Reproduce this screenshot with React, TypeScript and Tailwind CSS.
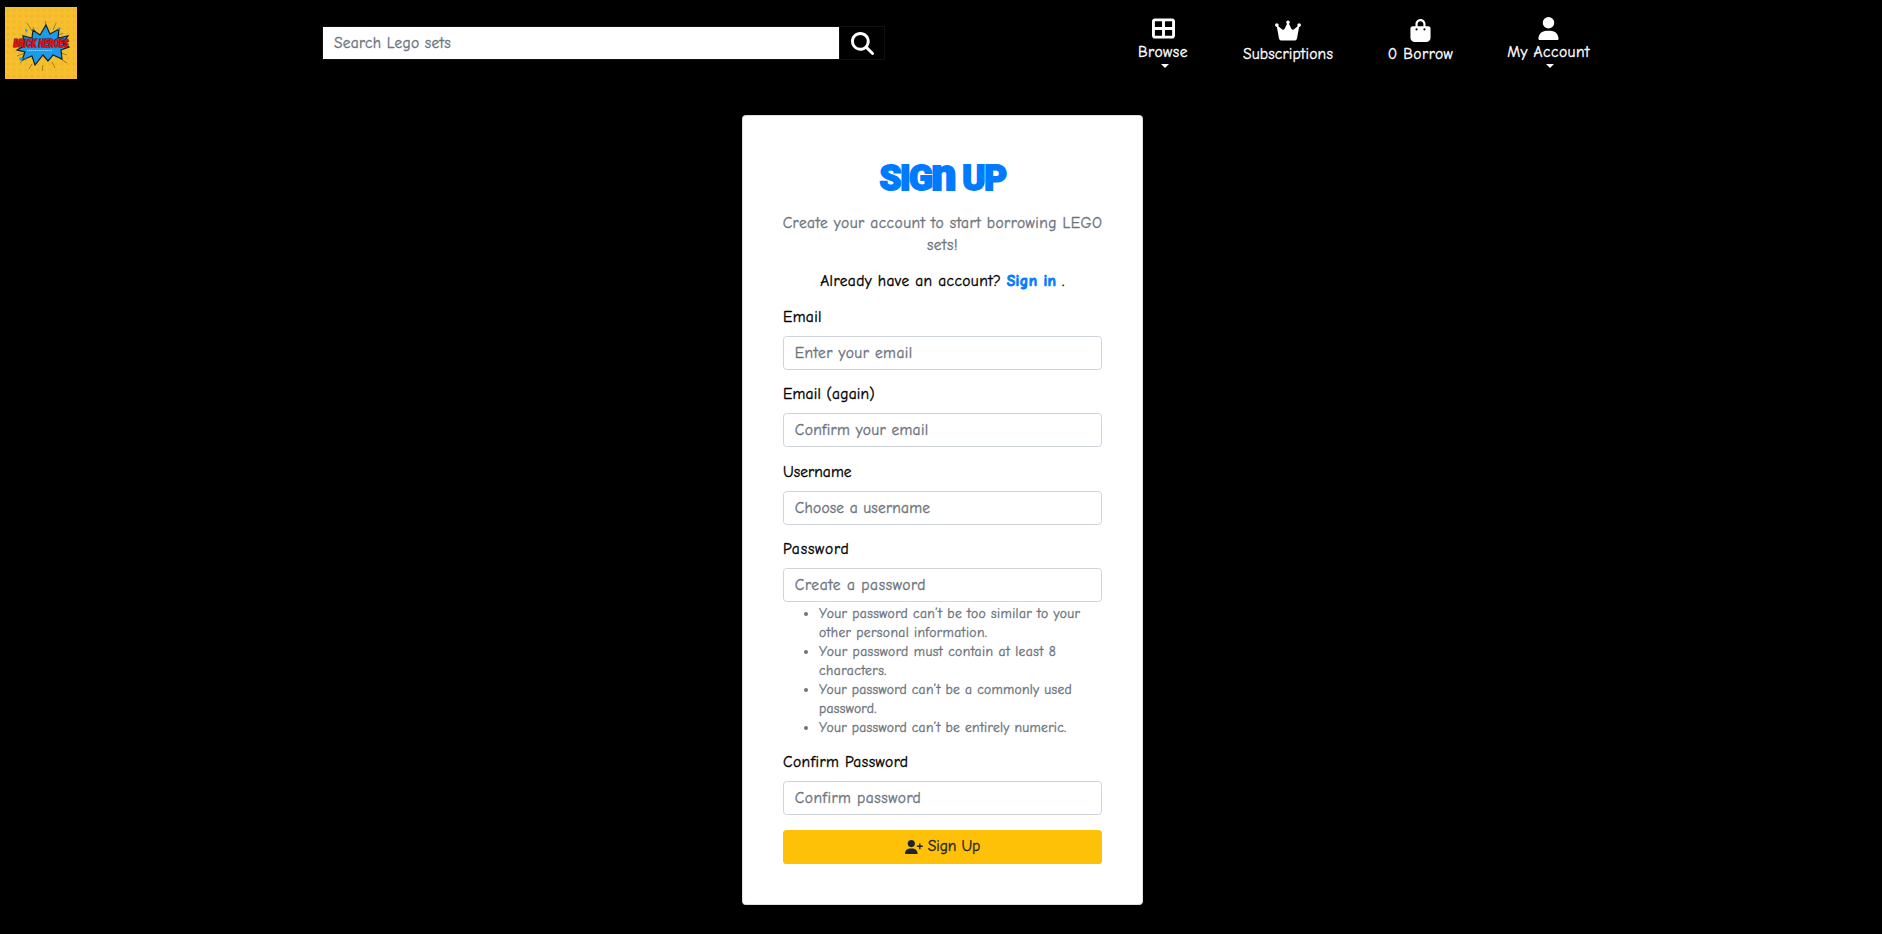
import type { ReactNode } from "react";
import {
  FaBagShopping,
  FaCrown,
  FaMagnifyingGlass,
  FaTableCellsLarge,
  FaUser,
  FaUserPlus,
} from "react-icons/fa6";

function Logo() {
  return (
    <svg viewBox="0 0 72 72" className="h-[72px] w-[72px] shrink-0" aria-label="Brick Heroes">
      <defs>
        <pattern id="dots" width="6" height="6" patternUnits="userSpaceOnUse">
          <rect width="6" height="6" fill="#f6c02c" />
          <circle cx="3" cy="3" r="1.6" fill="#f3b333" />
        </pattern>
      </defs>
      <rect width="72" height="72" fill="url(#dots)" />
      <g stroke="#8a6d1c" strokeWidth="0.8">
        <path d="M22 16l5 8M28 20l2 4M41 14l-1 6M51 16l-3 7M58 26l-6 3M17 28l6 2M12 49l8-3M15 56l6-5M38 58l-1 6M47 55l3 6M54 51l8 5M56 46l6 2M27 57l-3 5" />
      </g>
      <path
        d="M18 29l9 2 1-8 7 5 6-10 4 9 9-5-1 9 10-2-5 7 6 4-8 3 1 9-9-4-5 6-5-6-8 10-3-9-10 4 3-8-8-2 7-4z"
        fill="#1b9be8"
        stroke="#10202c"
        strokeWidth="1.2"
      />
      <path d="M20 22l3 1-2 3zM54 20l2 2-3 1zM15 50l3 1-1 3-3-1zM20 51l2 1-2 2z" fill="#2ba3cf" />
      <text
        transform="translate(36 39.800) scale(1 1.250)"
        textAnchor="middle"
        fontSize="8"
        fontWeight="900"
        fontStyle="italic"
        fill="#ee1219"
        stroke="#4a0c14"
        strokeWidth="0.9"
        paintOrder="stroke"
        className="font-['Roboto',sans-serif] tracking-[0.1px]"
      >
        BRICK HEROES
      </text>
      <path d="M22 43.500h25" stroke="#9fd4ee" strokeWidth="0.9" strokeDasharray="1.500 0.500" />
    </svg>
  );
}

function NavItem({
  icon,
  label,
  labelClass,
  caret = false,
}: {
  icon: ReactNode;
  label: string;
  labelClass: string;
  caret?: boolean;
}) {
  return (
    <a href="#" className="flex flex-col items-center text-white">
      <span className="flex h-[23px] items-center">{icon}</span>
      <span className={"mt-[2px] block whitespace-nowrap leading-[21.6px] " + labelClass}>{label}</span>
      {caret && (
        <svg viewBox="0 0 8 4" className="ml-[3px] h-[4px] w-[8px] fill-current">
          <path d="M0 0h8L4 4z" />
        </svg>
      )}
    </a>
  );
}

function Field({
  id,
  label,
  labelClass = "",
  placeholder,
  inputClass = "",
  type = "text",
  children,
}: {
  id: string;
  label: string;
  labelClass?: string;
  placeholder: string;
  inputClass?: string;
  type?: string;
  children?: ReactNode;
}) {
  return (
    <div className="mb-[14.8px]">
      <label htmlFor={id} className={"mb-[7.2px] block leading-[21.6px] " + labelClass}>
        {label}
      </label>
      <input
        id={id}
        type={type}
        placeholder={placeholder}
        className={
          "block h-[34px] w-full rounded-[3.6px] border border-[#ced4da] bg-white px-[10.8px] placeholder:text-[#6c757d] " +
          inputClass
        }
      />
      {children}
    </div>
  );
}

export default function App() {
  return (
    <div className="min-h-screen bg-black font-['Comic_Neue',cursive] text-[15.5px] leading-[21.6px] tracking-[0.45px] text-black [-webkit-text-stroke:0.35px]">
      <header className="flex h-[115px] items-start pl-[5px] pt-[7px]">
        <Logo />
        <form className="ml-[245px] mt-[19px] flex h-[34px] w-[563px] border border-[#101010]">
          <input
            placeholder="Search Lego sets"
            className="h-full w-[516px] bg-white px-[11px] tracking-[0.25px] text-black placeholder:text-[#6c757d]"
          />
          <button type="button" aria-label="Search" className="flex flex-1 items-center justify-center border-l border-[#101010] text-white">
            <FaMagnifyingGlass className="size-[23px]" />
          </button>
        </form>
        <nav className="flex items-start">
          <div className="ml-[253px] mt-[10px] w-[50px]">
            <NavItem caret icon={<FaTableCellsLarge className="size-[23px]" />} label="Browse" labelClass="tracking-[0.5px]" />
          </div>
          <div className="ml-[55px] mt-[12px] w-[90px]">
            <NavItem icon={<FaCrown className="h-[23px] w-[26px]" />} label="Subscriptions" labelClass="tracking-[0.2px]" />
          </div>
          <div className="ml-[55px] mt-[12px] w-[65px]">
            <NavItem icon={<FaBagShopping className="size-[23px]" />} label="0 Borrow" labelClass="tracking-[0.45px]" />
          </div>
          <div className="ml-[54px] mt-[10px] w-[83px]">
            <NavItem caret icon={<FaUser className="size-[23px]" />} label="My Account" labelClass="tracking-[0.45px]" />
          </div>
        </nav>
      </header>

      <main className="flex pl-[742px]">
        <section className="h-[790px] w-[401px] rounded-[3.6px] border border-[#dfdfdf] bg-white px-[40px] pt-[40px]">
          <h2 className="mb-[13.2px] h-[44px] whitespace-nowrap text-center font-['Roboto',sans-serif] text-[35px] font-black leading-[45px] tracking-[-1.4px] text-[#007bff] [-webkit-text-stroke:1.8px]">
            SIG<span className="text-[44px] leading-[0]">n</span> UP
          </h2>
          <p className="-mx-2 mb-[14.4px] text-center text-[#6c757d]">
            Create your account to start borrowing LEGO
            <br />
            sets!
          </p>
          <p className="mb-[14.4px] text-center tracking-[0.4px]">
            Already have an account?{" "}
            <a href="#" className="font-bold text-[#007bff] [-webkit-text-stroke:0.8px]">
              Sign in
            </a>{" "}
            .
          </p>
          <form>
            <Field id="email" label="Email" labelClass="tracking-[0.35px]" placeholder="Enter your email" />
            <Field id="email2" label="Email (again)" labelClass="tracking-[0.2px]" placeholder="Confirm your email" inputClass="tracking-[0.32px]" />
            <Field id="username" label="Username" labelClass="tracking-[0.05px]" placeholder="Choose a username" inputClass="tracking-[0.2px]" />
            <Field id="password" type="password" label="Password" labelClass="tracking-[0.8px]" placeholder="Create a password" inputClass="tracking-[0.58px]">
              <ul className="mt-[3px] list-disc pl-[36px] text-[13.6px] leading-[18.9px] tracking-[0.38px] text-[#6c757d]">
                <li>Your password can’t be too similar to your<br />other personal information.</li>
                <li className="tracking-[0.43px]">Your password must contain at least 8<br />characters.</li>
                <li className="tracking-[0.29px]">Your password can’t be a commonly used<br />password.</li>
                <li className="tracking-[0.29px]">Your password can’t be entirely numeric.</li>
              </ul>
            </Field>
            <Field id="password2" type="password" label="Confirm Password" placeholder="Confirm password" inputClass="tracking-[0.5px]" />
            <button type="button" className="flex h-[34px] w-full items-center justify-center gap-[5px] rounded-[3.6px] bg-[#ffc107] tracking-[-0.1px] text-[#212529]">
              <FaUserPlus className="h-[14.4px] w-[18px]" />
              Sign Up
            </button>
          </form>
        </section>
      </main>
    </div>
  );
}
